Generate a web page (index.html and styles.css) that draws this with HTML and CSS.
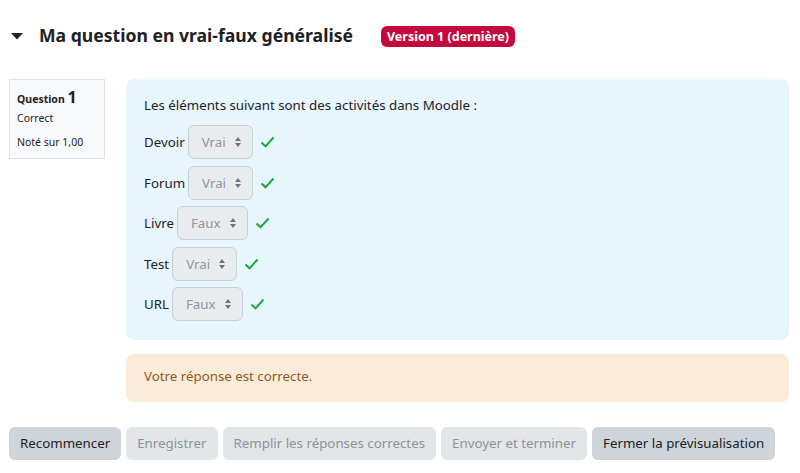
FILE: index.html
```html
<!DOCTYPE html>
<html lang="fr">
<head>
<meta charset="utf-8">
<link rel="stylesheet" href="styles.css">
</head>
<body>
<div class="page">
  <h2 class="qhead">
    <span class="caret"><svg width="12" height="7" viewBox="0 0 12 7"><path d="M0 0 H12 L6 6.5 Z" fill="#1d2125"/></svg></span>
    <span class="qtitle">Ma question en vrai-faux généralisé</span>
    <span class="badge">Version 1 (dernière)</span>
  </h2>
  <div class="que">
    <div class="info">
      <div class="qno"><span class="qlabel">Question</span> <span class="qnum">1</span></div>
      <div class="state">Correct</div>
      <div class="grade">Noté sur 1,00</div>
    </div>
    <div class="content">
      <div class="formulation">
        <p class="qtext">Les éléments suivant sont des activités dans Moodle :</p>
        <div class="rows">
          <div class="row"><span class="lbl">Devoir</span><span class="sel">Vrai<i class="arr"></i></span><svg class="ok" width="15" height="12" viewBox="0 0 15 12"><path d="M1.5 6.5 L5.5 10.3 L13.5 1.5" fill="none" stroke="#1fa53a" stroke-width="2"/></svg></div>
          <div class="row"><span class="lbl">Forum</span><span class="sel">Vrai<i class="arr"></i></span><svg class="ok" width="15" height="12" viewBox="0 0 15 12"><path d="M1.5 6.5 L5.5 10.3 L13.5 1.5" fill="none" stroke="#1fa53a" stroke-width="2"/></svg></div>
          <div class="row"><span class="lbl">Livre</span><span class="sel">Faux<i class="arr"></i></span><svg class="ok" width="15" height="12" viewBox="0 0 15 12"><path d="M1.5 6.5 L5.5 10.3 L13.5 1.5" fill="none" stroke="#1fa53a" stroke-width="2"/></svg></div>
          <div class="row"><span class="lbl">Test</span><span class="sel">Vrai<i class="arr"></i></span><svg class="ok" width="15" height="12" viewBox="0 0 15 12"><path d="M1.5 6.5 L5.5 10.3 L13.5 1.5" fill="none" stroke="#1fa53a" stroke-width="2"/></svg></div>
          <div class="row"><span class="lbl">URL</span><span class="sel">Faux<i class="arr"></i></span><svg class="ok" width="15" height="12" viewBox="0 0 15 12"><path d="M1.5 6.5 L5.5 10.3 L13.5 1.5" fill="none" stroke="#1fa53a" stroke-width="2"/></svg></div>
        </div>
      </div>
      <div class="outcome">Votre réponse est correcte.</div>
    </div>
  </div>
  <div class="buttons">
    <span class="btn">Recommencer</span>
    <span class="btn dis">Enregistrer</span>
    <span class="btn dis">Remplir les réponses correctes</span>
    <span class="btn dis">Envoyer et terminer</span>
    <span class="btn">Fermer la prévisualisation</span>
  </div>
</div>
</body>
</html>
```
FILE: styles.css
```css
html, body {
  margin: 0;
  padding: 0;
  background: #fff;
}
body {
  font-family: "Noto Sans", "Open Sans", sans-serif;
  color: #1d2125;
  font-size: 13.3px;
}
.page {
  padding: 0 0 0 9px;
  width: 780px;
}
.qhead {
  display: flex;
  align-items: center;
  margin: 0;
  height: 70px;
  font-size: 17.6px;
  font-weight: 700;
}
.caret {
  display: flex;
  width: 30px;
  padding-left: 2px;
  box-sizing: border-box;
  margin-top: 2px;
}
.badge {
  margin-left: 28px;
  background: #c40a3d;
  color: #fff;
  font-size: 12.5px;
  font-weight: 700;
  border-radius: 6px;
  padding: 0 6px;
  height: 21px;
  line-height: 21px;
  margin-top: 3px;
  white-space: nowrap;
}
.que {
  display: flex;
  gap: 21px;
  margin-top: 9px;
}
.info {
  width: 96px;
  height: 80px;
  box-sizing: border-box;
  background: #f8f9fa;
  border: 1px solid #dee2e6;
  padding: 6px 7px;
  font-size: 10.5px;
  flex: none;
}
.qno {
  line-height: 22px;
  height: 22px;
}
.qlabel {
  font-weight: 700;
}
.qnum {
  font-size: 16px;
  font-weight: 700;
}
.state {
  margin-top: 3px;
  line-height: 14px;
}
.grade {
  margin-top: 10px;
  line-height: 14px;
}
.content {
  flex: 1;
  display: flex;
  flex-direction: column;
  gap: 14px;
}
.formulation {
  background: #e7f5fd;
  border-radius: 8px;
  padding: 16px 18px 19px;
}
.qtext {
  margin: 0 0 10px;
  line-height: 20px;
}
.rows {
  display: flex;
  flex-direction: column;
  gap: 6.5px;
}
.row {
  display: flex;
  align-items: center;
  height: 34px;
}
.lbl {
  margin-right: 3px;
}
.sel {
  display: flex;
  align-items: center;
  height: 34px;
  box-sizing: border-box;
  border: 1px solid #c9ced3;
  border-radius: 6px;
  background: #e9ecef;
  color: #8f959c;
  padding: 0 10px 0 13px;
  gap: 9px;
}
.arr {
  display: block;
  width: 7px;
  height: 10px;
  position: relative;
}
.arr::before, .arr::after {
  content: "";
  position: absolute;
  left: 0;
  border-left: 3.5px solid transparent;
  border-right: 3.5px solid transparent;
}
.arr::before {
  top: 0;
  border-bottom: 4px solid #6c737a;
}
.arr::after {
  bottom: 0;
  border-top: 4px solid #6c737a;
}
.ok {
  margin-left: 7px;
}
.outcome {
  background: #fdebd9;
  color: #8a5a1f;
  border-radius: 8px;
  height: 48px;
  line-height: 44px;
  padding: 0 18px;
}
.buttons {
  display: flex;
  gap: 5px;
  margin-top: 25px;
}
.btn {
  display: block;
  height: 33px;
  line-height: 33px;
  padding: 0 11px;
  border-radius: 6px;
  background: #ced4da;
  color: #1d2125;
  white-space: nowrap;
}
.btn.dis {
  background: #e3e6e9;
  color: #8d9398;
}
```
